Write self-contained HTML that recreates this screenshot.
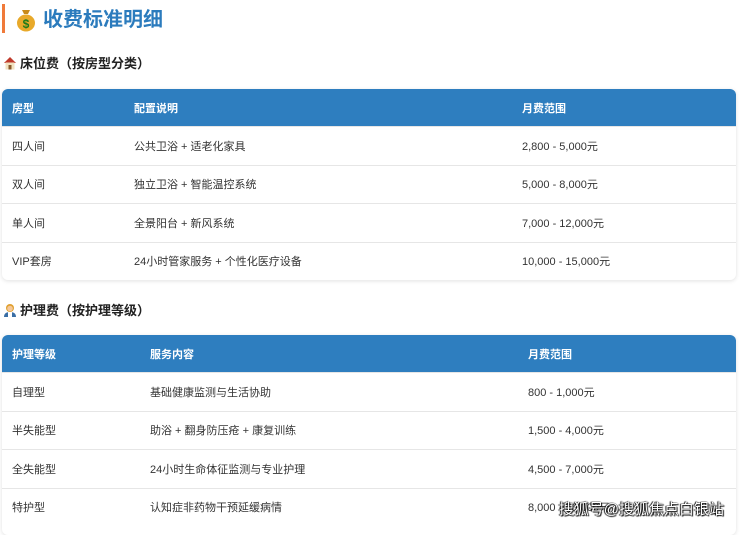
<!DOCTYPE html>
<html><head><meta charset="utf-8">
<style>
*{margin:0;padding:0;box-sizing:border-box}
html,body{width:740px;height:526px;overflow:hidden;background:#fff;font-family:"Liberation Sans","Noto Sans CJK SC",sans-serif;color:#333}
.bar{position:absolute;left:2px;top:4px;width:3px;height:29px;background:#f07a3a}
.title{position:absolute;left:15px;top:6px;font-size:20px;font-weight:bold;color:#2b7bbd;display:flex;align-items:center;gap:6px;line-height:28px}
.sec{position:absolute;left:3px;font-size:13px;font-weight:bold;color:#222;display:flex;align-items:center;gap:3px}
.tbl{position:absolute;left:2px;width:734px;border-radius:6px;overflow:hidden;box-shadow:0 1px 4px rgba(0,0,0,.12);background:#fff}
.row{height:38.5px;display:flex;align-items:center;font-size:11px;color:#333;border-top:1px solid #e6e6e6;position:relative}
.row span{position:absolute}
.hd{background:#2e7ebf;color:#fff;font-weight:bold;border-top:none;height:37px}
.wm{position:absolute;right:16px;bottom:7px;font-size:15px;color:#fff;text-shadow:0 0 1px #000,1px 1px 1px #000,-1px 0 1px #000}
</style></head><body>
<div class="bar"></div>
<div class="title"><svg width="22" height="24" viewBox="0 0 22 24"><path d="M7 2h8l-2 4h-4z" fill="#c98a1a"/><ellipse cx="11" cy="15" rx="9" ry="8.5" fill="#e8a92a"/><text x="11" y="20" font-size="12" text-anchor="middle" fill="#1a7a1a" font-weight="bold" font-family="Liberation Sans">$</text></svg>收费标准明细</div>
<div class="sec" style="top:53px"><svg width="14" height="14" viewBox="0 0 14 14"><path d="M1 7L7 1l6 6z" fill="#c0392b"/><rect x="2.5" y="6.5" width="9" height="7" fill="#f1e2c0"/><rect x="5.5" y="9" width="3" height="4.5" fill="#8a5a2b"/></svg>床位费（按房型分类）</div>
<div class="tbl" style="top:89px">
<div class="row hd"><span style="left:10px">房型</span><span style="left:132px">配置说明</span><span style="left:520px">月费范围</span></div>
<div class="row"><span style="left:10px">四人间</span><span style="left:132px">公共卫浴 + 适老化家具</span><span style="left:520px">2,800 - 5,000元</span></div>
<div class="row"><span style="left:10px">双人间</span><span style="left:132px">独立卫浴 + 智能温控系统</span><span style="left:520px">5,000 - 8,000元</span></div>
<div class="row"><span style="left:10px">单人间</span><span style="left:132px">全景阳台 + 新风系统</span><span style="left:520px">7,000 - 12,000元</span></div>
<div class="row"><span style="left:10px">VIP套房</span><span style="left:132px">24小时管家服务 + 个性化医疗设备</span><span style="left:520px">10,000 - 15,000元</span></div>
</div>
<div class="sec" style="top:300px"><svg width="14" height="14" viewBox="0 0 14 14"><circle cx="7" cy="5" r="4" fill="#e0a030"/><circle cx="7" cy="5.5" r="2.8" fill="#f5c89a"/><path d="M1 14c0-4 3-5 6-5s6 1 6 5z" fill="#3a6ea5"/><rect x="5" y="9" width="4" height="5" fill="#fff"/></svg>护理费（按护理等级）</div>
<div class="tbl" style="top:335px;height:200px">
<div class="row hd"><span style="left:10px">护理等级</span><span style="left:148px">服务内容</span><span style="left:526px">月费范围</span></div>
<div class="row"><span style="left:10px">自理型</span><span style="left:148px">基础健康监测与生活协助</span><span style="left:526px">800 - 1,000元</span></div>
<div class="row"><span style="left:10px">半失能型</span><span style="left:148px">助浴 + 翻身防压疮 + 康复训练</span><span style="left:526px">1,500 - 4,000元</span></div>
<div class="row"><span style="left:10px">全失能型</span><span style="left:148px">24小时生命体征监测与专业护理</span><span style="left:526px">4,500 - 7,000元</span></div>
<div class="row"><span style="left:10px">特护型</span><span style="left:148px">认知症非药物干预延缓病情</span><span style="left:526px">8,000 - 10,000元</span></div>
</div>
<div class="wm">搜狐号@搜狐焦点白银站</div>
</body></html>
